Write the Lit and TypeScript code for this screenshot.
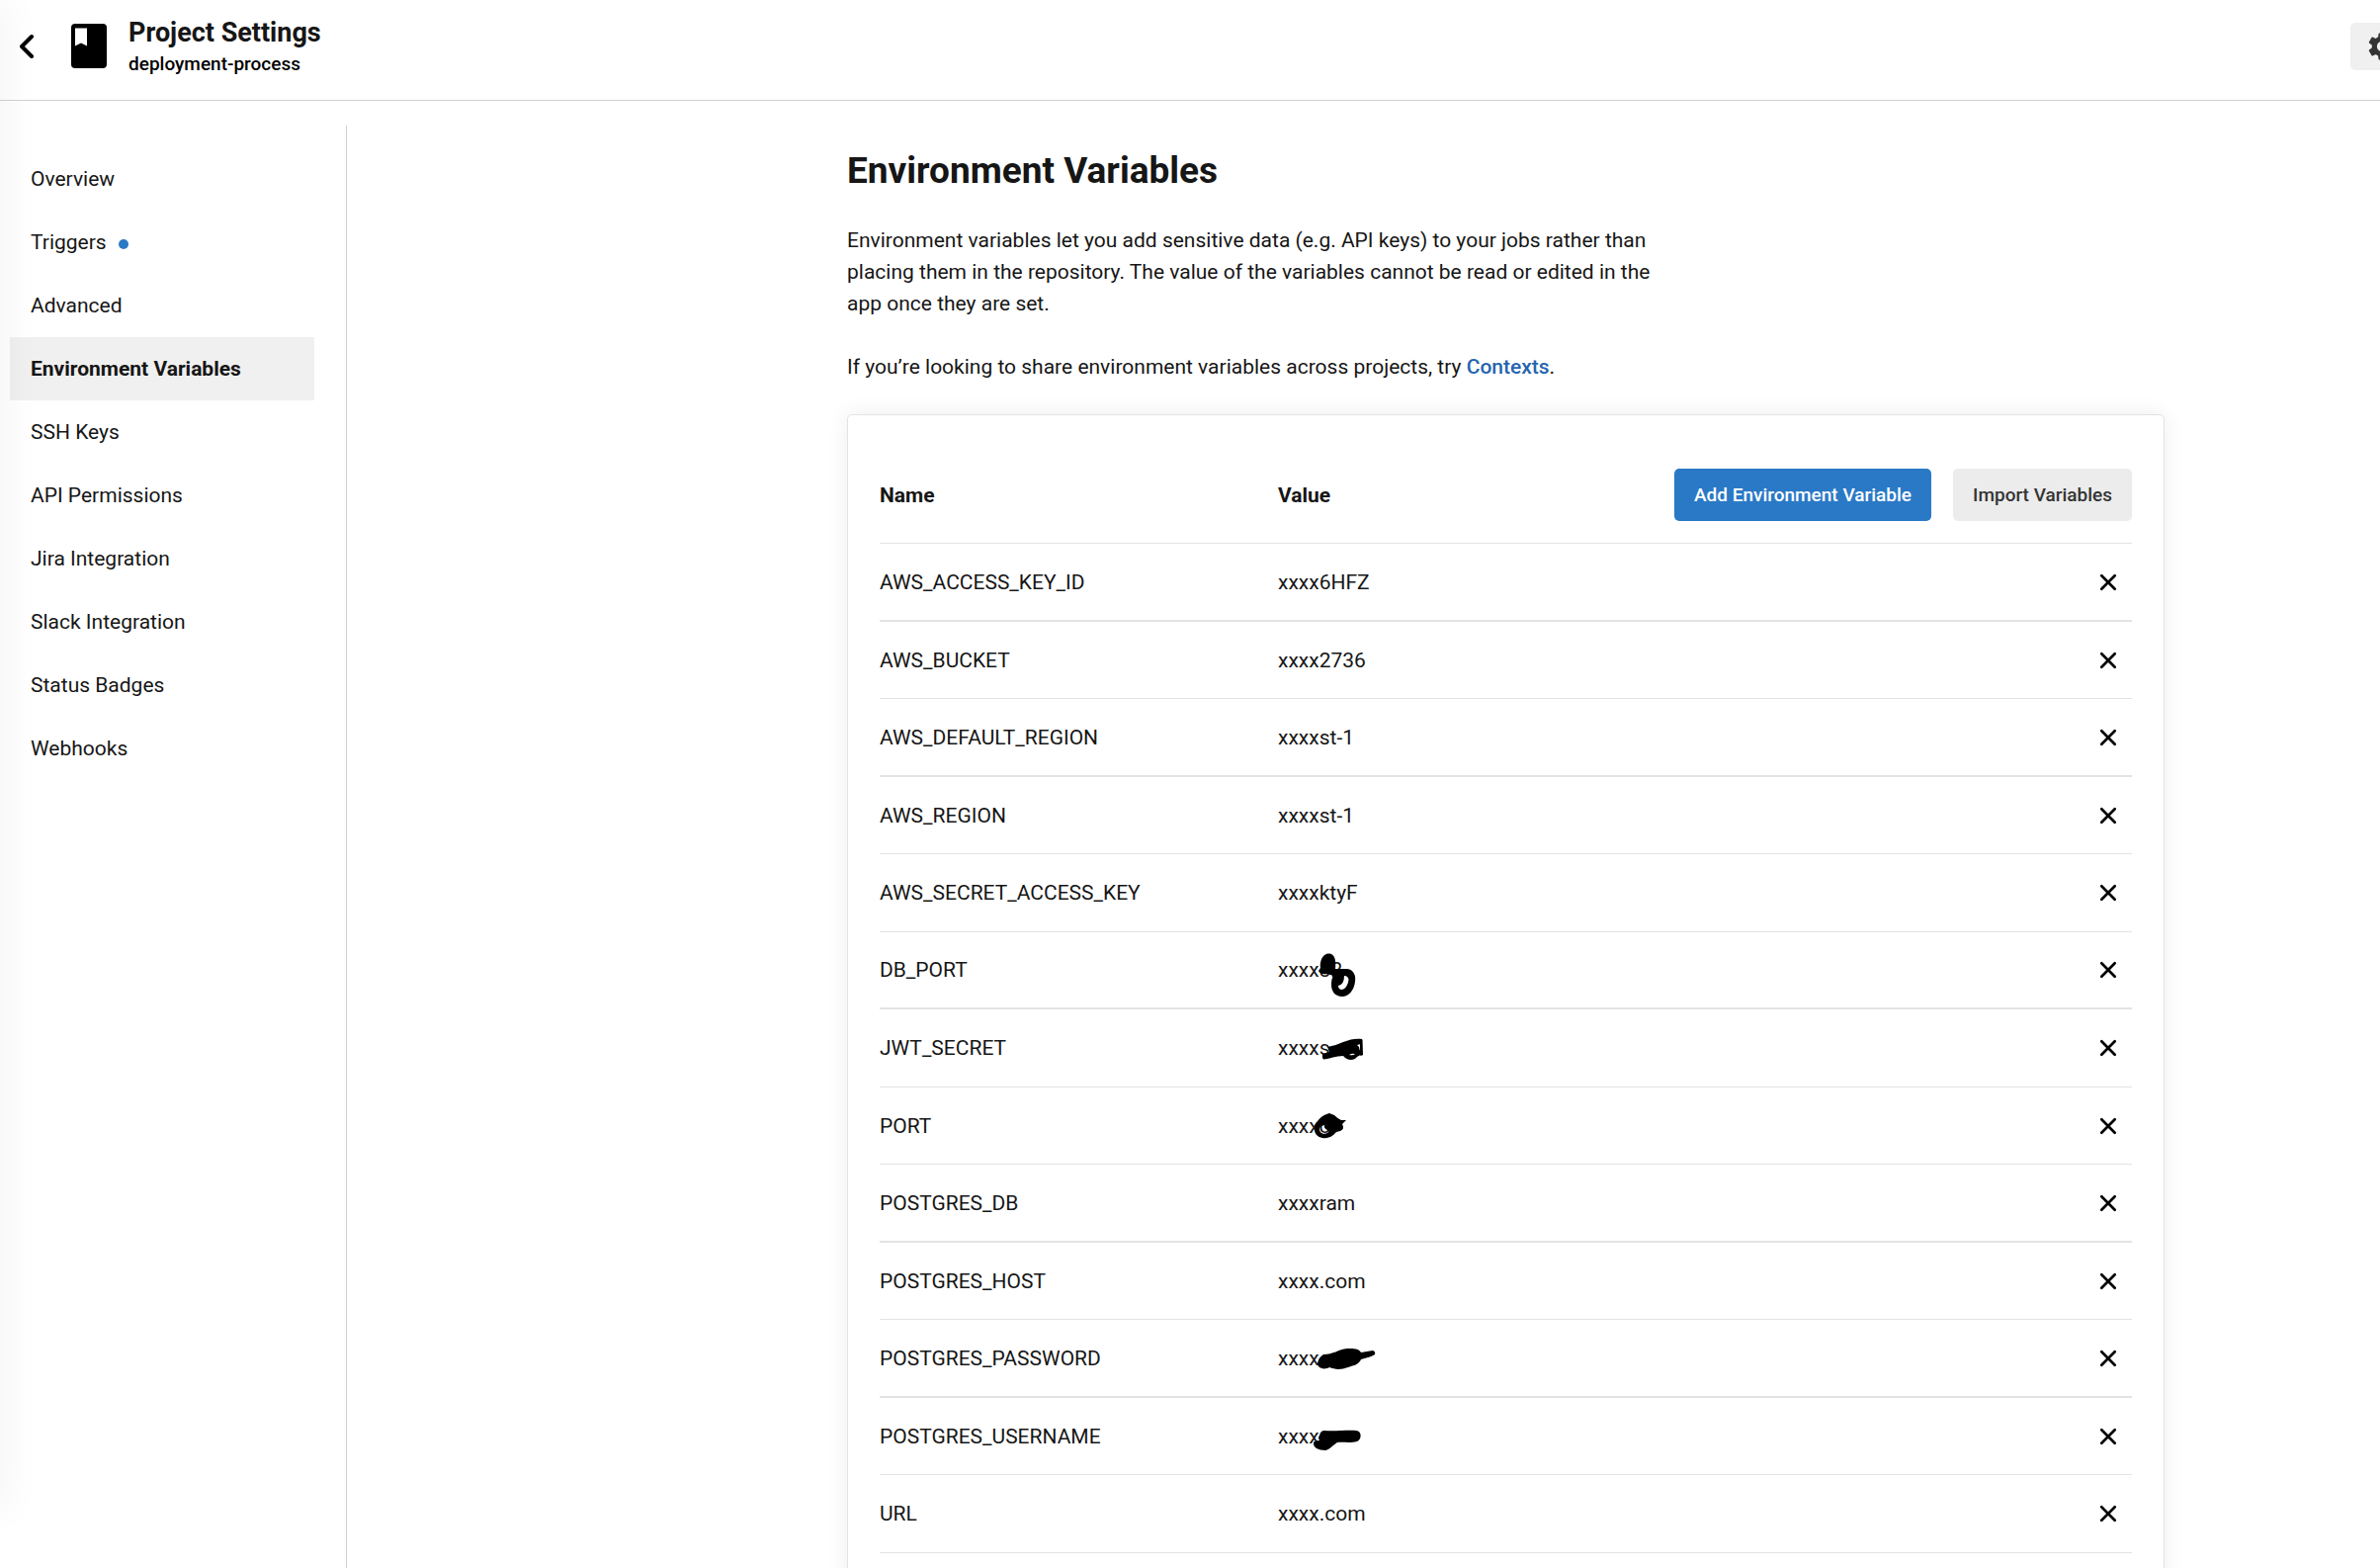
import { LitElement, html, css, svg, nothing } from "lit";
import { customElement, state } from "lit/decorators.js";

interface NavItem { label: string; dot?: boolean; }
interface Variable { name: string; value: string; mark?: string; }

const NAV: NavItem[] = [
  { label: "Overview" },
  { label: "Triggers", dot: true },
  { label: "Advanced" },
  { label: "Environment Variables" },
  { label: "SSH Keys" },
  { label: "API Permissions" },
  { label: "Jira Integration" },
  { label: "Slack Integration" },
  { label: "Status Badges" },
  { label: "Webhooks" },
];

const VARIABLES: Variable[] = [
  { name: "AWS_ACCESS_KEY_ID", value: "xxxx6HFZ" },
  { name: "AWS_BUCKET", value: "xxxx2736" },
  { name: "AWS_DEFAULT_REGION", value: "xxxxst-1" },
  { name: "AWS_REGION", value: "xxxxst-1" },
  { name: "AWS_SECRET_ACCESS_KEY", value: "xxxxktyF" },
  { name: "DB_PORT", value: "xxxx32", mark: "rings" },
  { name: "JWT_SECRET", value: "xxxxs", mark: "smear" },
  { name: "PORT", value: "xxxxo", mark: "blob" },
  { name: "POSTGRES_DB", value: "xxxxram" },
  { name: "POSTGRES_HOST", value: "xxxx.com" },
  { name: "POSTGRES_PASSWORD", value: "xxxx", mark: "swipe" },
  { name: "POSTGRES_USERNAME", value: "xxxx", mark: "hook" },
  { name: "URL", value: "xxxx.com" },
];

/* Ink drawn over a value, on a 100 x 48 canvas centred on the text line. */
const MARKS: Record<string, unknown> = {
  rings: svg`
    <path d="M41 25L43 22C42 14 46 7 52 7.500C58 8 59 16 58 23L70 23C77 24 79 30 78 36C77 45 71 51 65 51C58 51 54 46 54 39Q54 33 56 30L50 28Q43 29 41 25Z"/>
    <path fill="#fff" d="M67 30Q71 30 71.500 34C71 39 68 44 64 44Q61 43 61 40Q67 39 67 30Z"/>`,
  smear: svg`
    <path d="M45 34V30L52 28L50 23C56 22 61 20 66 18C73 15 80 14 85 15L86 31Q82 31 80 33C77 37 70 37 66 32C59 32 52 35 46 35.500Z"/>
    <path fill="#fff" d="M72 31Q75 29 78 30Q76 32 72 31ZM80 21L84 20V27Q82 26 82 23Z"/>
    <path d="M83 15.500H85.500V31.500H83Z"/>`,
  blob: svg`
    <path fill-rule="evenodd" d="M37 27C37 20 44 13 52 11L57 13Q61 17 64 18L69 18L65 22Q68 27 63 29L59 30C55 35 50 37 45 36C40 35 37 32 37 27ZM42 27C42 31 46 33 50 31Q53 29 50 28Q46 26 47 23Q42 24 42 27Z"/>`,
  swipe: svg`
    <path d="M40 29Q41 23 46 20C56 20 61 15 70 14C77 14 82 14 84 18L96 16Q99 17 98 20Q96 22 84 25C82 30 77 31 71 33C63 36 57 35 52 33C47 36 40 34 40 29Z"/>`,
  hook: svg`
    <path d="M42 23Q43 18 47 18C57 19 71 17 79 18C85 18 85 27 80 29C72 31 66 29 60 30C55 33 53 37 48 38C41 38 35 35 36 30Q37 28 42 28Q40 25 42 23Z"/>`,
};

@customElement("app-root")
export class AppRoot extends LitElement {
  @state() private current = "Environment Variables";
  @state() private variables = VARIABLES;

  static styles = css`
    :host {
      --ink: #161616;
      --line: #d0d0d0;
      --rule: #e3e3e3;
      --blue: #2a79c6;
      display: flex;
      flex-direction: column;
      position: relative;
      height: 100vh;
      overflow: hidden;
      background: #fff;
      color: var(--ink);
      font: 400 21px/32px Roboto, "Liberation Sans", sans-serif;
    }
    * { box-sizing: border-box; }
    button { font: inherit; border: 0; cursor: pointer; }
    svg { display: block; }

    .edge {
      position: absolute;
      left: -20px;
      top: 0;
      width: 20px;
      height: calc(100vh - 60px);
      box-shadow: 0 0 40px rgba(0, 0, 0, 0.08);
      pointer-events: none;
    }

    .top {
      display: grid;
      grid-template-columns: auto auto 1fr 30px;
      align-items: center;
      flex: none;
      height: 102px;
      padding-bottom: 8px;
      border-bottom: 1px solid var(--line);
    }
    .back { display: block; padding: 0 20px; color: #000; }
    .book { margin-right: 22px; }
    .names { padding-top: 3px; }
    .title { margin: 0; font-size: 27px; line-height: 34px; font-weight: 700; }
    .project { margin: 0; font-size: 19px; line-height: 30px; font-weight: 500; color: #000; }
    .gear {
      width: 240px;
      height: 48px;
      padding: 0 15px;
      border-radius: 5px;
      background: #f0f0f0;
      color: #343434;
    }

    .body {
      display: grid;
      grid-template-columns: 351px 1fr;
      flex: 1;
      min-height: 0;
      padding-top: 25px;
    }
    .side { padding: 22px 32px 0 10px; border-right: 1px solid var(--line); }
    .nav { display: flex; flex-direction: column; margin: 0; padding: 0; list-style: none; }
    .link {
      display: flex;
      align-items: center;
      gap: 12px;
      height: 64px;
      padding: 0 21px;
      color: inherit;
      text-decoration: none;
    }
    .link.on { background: #f0f0f0; font-weight: 700; }
    .dot { width: 10px; height: 10px; margin-top: 3px; border-radius: 50%; background: var(--blue); }

    .main {
      display: grid;
      grid-template-columns: 506fr minmax(0, 1333px) 218fr;
      align-items: start;
    }
    .content { grid-column: 2; }
    .heading { margin: 22px 0 30px; font-size: 37px; line-height: 48px; font-weight: 700; }
    .text { max-width: 840px; margin: 0 0 32px; }
    .context { color: #2565ae; font-weight: 500; text-decoration: none; }

    .card {
      padding: 32px;
      border: 1px solid var(--rule);
      border-radius: 5px;
      box-shadow: 0 0 22px rgba(0, 0, 0, 0.07);
      background: #fff;
    }
    .table { width: 100%; border-collapse: separate; border-spacing: 0; table-layout: fixed; }
    .table th, .table td { padding: 0; text-align: left; border-bottom: 1px solid var(--rule); }
    .table th { height: 98px; font-weight: 700; }
    .table td { height: 79px; }
    .rows tr:nth-child(even) td { height: 78px; }
    .rows tr:is(:nth-child(5n + 1), :nth-child(3), :nth-child(9)) td { border-bottom-width: 2px; }
    .col-name { width: 403px; }
    .col-value { width: 403px; }
    .actions { display: flex; justify-content: flex-end; gap: 22px; }
    .btn {
      height: 53px;
      padding: 0 20px;
      border-radius: 5px;
      font-size: 19px;
      font-weight: 500;
      white-space: nowrap;
      background: #ececec;
      color: #343434;
    }
    .btn.primary { background: var(--blue); color: #fff; }
    .value { position: relative; display: inline-block; }
    .ink { position: absolute; left: 0; top: -8px; color: #000; }
    .remove { display: block; margin-left: auto; padding: 12px; background: none; color: #000; }
  `;

  private remove(name: string) {
    this.variables = this.variables.filter((v) => v.name !== name);
  }

  private navItem(item: NavItem) {
    const on = item.label === this.current;
    return html`<li>
      <a class="link ${on ? "on" : ""}" href="#" aria-current=${on ? "page" : "false"}
        @click=${(e: Event) => { e.preventDefault(); this.current = item.label; }}
        >${item.label}${item.dot ? html`<span class="dot"></span>` : nothing}</a>
    </li>`;
  }

  private row(v: Variable) {
    return html`<tr>
      <td>${v.name}</td>
      <td><span class="value">${v.value}${v.mark
        ? html`<svg class="ink" width="100" height="48" viewBox="0 0 100 48" fill="currentColor" overflow="visible" aria-hidden="true">${MARKS[v.mark]}</svg>`
        : nothing}</span></td>
      <td>
        <button class="remove" aria-label="Remove ${v.name}" @click=${() => this.remove(v.name)}>
          <svg width="24" height="24" viewBox="0 0 24 24" fill="none" stroke="currentColor" stroke-width="2.700" stroke-linecap="round">
            <path d="M5.300 5.300L18.700 18.700M18.700 5.300L5.300 18.700"/>
          </svg>
        </button>
      </td>
    </tr>`;
  }

  render() {
    return html`
      <header class="top">
        <a class="back" href="#" aria-label="Back">
          <svg width="32" height="32" viewBox="0 0 32 32" fill="none" stroke="currentColor" stroke-width="4" stroke-linecap="round" stroke-linejoin="round">
            <path d="M12 6L2 16L12 26"/>
          </svg>
        </a>
        <svg class="book" width="36" height="45" viewBox="0 0 36 45" aria-hidden="true">
          <rect width="36" height="45" rx="4"/>
          <path fill="#fff" d="M4 4.500H16V22.500L10 19.500L4 22.500Z"/>
        </svg>
        <div class="names">
          <h1 class="title">Project Settings</h1>
          <p class="project">deployment-process</p>
        </div>
        <button class="gear" aria-label="Project settings">
          <svg width="34" height="34" viewBox="0 0 24 24" fill="currentColor">
            <path d="M19.140 12.940c.040-.300.060-.610.060-.940 0-.320-.020-.640-.070-.940l2.030-1.580c.180-.140.230-.410.120-.610l-1.920-3.320c-.120-.220-.370-.290-.590-.220l-2.390.960c-.500-.380-1.030-.700-1.620-.940l-.360-2.540c-.040-.240-.240-.410-.480-.410h-3.840c-.240 0-.430.170-.470.410l-.360 2.540c-.590.240-1.130.570-1.620.940l-2.390-.960c-.220-.080-.470 0-.590.220L2.740 8.870c-.120.210-.080.470.120.610l2.030 1.580c-.050.300-.090.630-.090.940s.020.640.070.940l-2.030 1.580c-.180.140-.230.410-.120.610l1.920 3.320c.120.220.370.290.590.220l2.390-.960c.500.380 1.030.700 1.620.940l.360 2.540c.050.240.240.410.480.410h3.840c.240 0 .440-.170.470-.410l.360-2.540c.590-.240 1.130-.560 1.620-.940l2.390.960c.220.080.470 0 .590-.220l1.920-3.320c.120-.220.070-.470-.120-.610l-2.010-1.580zM12 15.600c-1.980 0-3.600-1.620-3.600-3.600s1.620-3.600 3.600-3.600 3.600 1.620 3.600 3.600-1.620 3.600-3.600 3.600z"/>
          </svg>
        </button>
      </header>
      <div class="body">
        <nav class="side" aria-label="Project settings">
          <ul class="nav">${NAV.map((item) => this.navItem(item))}</ul>
        </nav>
        <main class="main">
          <div class="content">
            <h2 class="heading">Environment Variables</h2>
            <p class="text">Environment variables let you add sensitive data (e.g. API keys) to your jobs rather than placing them in the repository. The value of the variables cannot be read or edited in the app once they are set.</p>
            <p class="text">If you’re looking to share environment variables across projects, try <a class="context" href="#">Contexts</a>.</p>
            <section class="card">
              <table class="table">
                <thead>
                  <tr>
                    <th class="col-name" scope="col">Name</th>
                    <th class="col-value" scope="col">Value</th>
                    <th scope="col">
                      <div class="actions">
                        <button class="btn primary">Add Environment Variable</button>
                        <button class="btn">Import Variables</button>
                      </div>
                    </th>
                  </tr>
                </thead>
                <tbody class="rows">${this.variables.map((v) => this.row(v))}</tbody>
              </table>
            </section>
          </div>
        </main>
      </div>
      <div class="edge"></div>
    `;
  }
}
